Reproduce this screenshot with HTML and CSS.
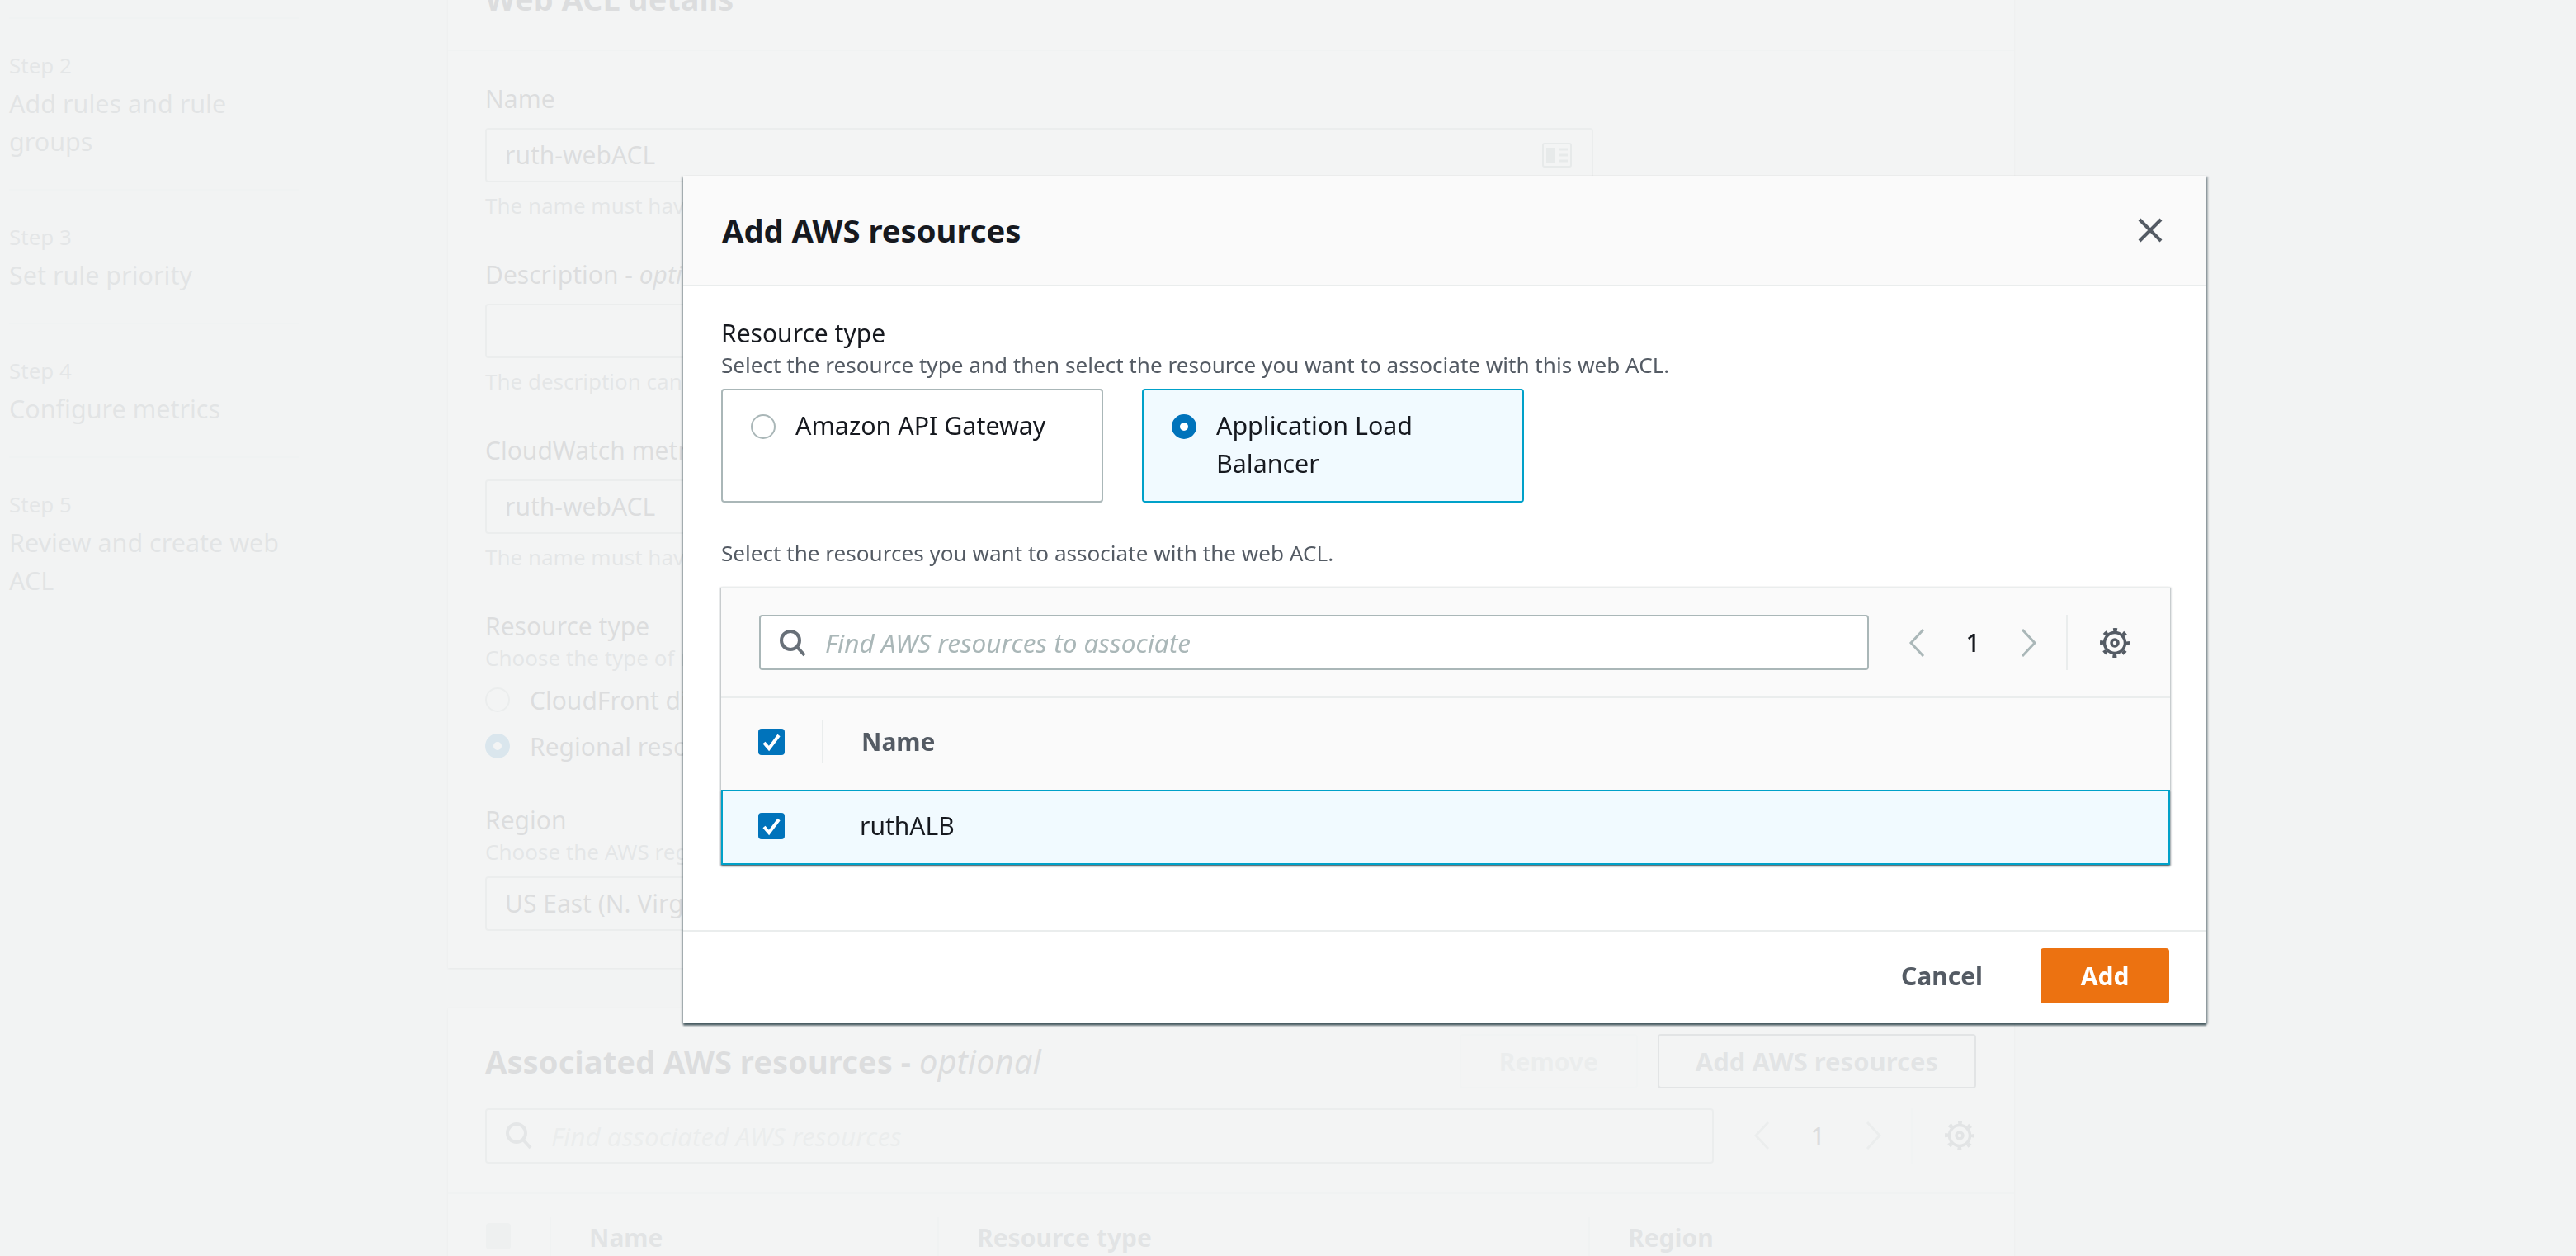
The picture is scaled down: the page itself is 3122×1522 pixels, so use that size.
FILE: index.html
```html
<!DOCTYPE html>
<html lang="en">
<head>
  <meta charset="UTF-8">
  <title>Add AWS resources</title>
  <link rel="stylesheet" href="styles.css">
</head>
<body>
<div class="page">
  <aside class="steps">
    <div class="step">
      <div class="step-num">Step 2</div>
      <div class="step-name">Add rules and rule groups</div>
    </div>
    <div class="step">
      <div class="step-num">Step 3</div>
      <div class="step-name">Set rule priority</div>
    </div>
    <div class="step">
      <div class="step-num">Step 4</div>
      <div class="step-name">Configure metrics</div>
    </div>
    <div class="step">
      <div class="step-num">Step 5</div>
      <div class="step-name">Review and create web ACL</div>
    </div>
  </aside>

  <main class="main">
    <section class="card">
      <h2 class="card-head">Web ACL details</h2>
      <div class="card-body">
        <div class="field">
          <label class="label">Name</label>
          <div class="input">ruth-webACL
            <svg class="input-icon" width="36" height="30" viewBox="0 0 36 30"><rect x="1" y="1" width="34" height="28" rx="2" fill="none" stroke="#879596" stroke-width="2"/><rect x="5" y="6" width="11" height="18" fill="#879596"/><path d="M20 8h11M20 15h11M20 22h11" stroke="#879596" stroke-width="3"/></svg>
          </div>
          <div class="note">The name must have 1-128 characters.</div>
        </div>
        <div class="field">
          <label class="label">Description - <i>optional</i></label>
          <div class="input"></div>
          <div class="note">The description can have 1-256 characters.</div>
        </div>
        <div class="field">
          <label class="label">CloudWatch metric name</label>
          <div class="input">ruth-webACL</div>
          <div class="note">The name must have 1-128 characters.</div>
        </div>
        <div class="field field-radio">
          <label class="label">Resource type</label>
          <div class="hint">Choose the type of resource to associate.</div>
          <div class="radio-list">
            <div class="radio-row"><span class="radio"></span>CloudFront distributions</div>
            <div class="radio-row"><span class="radio radio-on"></span>Regional resources</div>
          </div>
        </div>
        <div class="field field-last">
          <label class="label">Region</label>
          <div class="hint">Choose the AWS region.</div>
          <div class="input input-region">US East (N. Virginia)</div>
        </div>
      </div>
    </section>

    <section class="card card-assoc">
      <div class="assoc-head">
        <h2 class="assoc-title">Associated AWS resources - <i>optional</i></h2>
        <button class="btn btn-off">Remove</button>
        <button class="btn">Add AWS resources</button>
      </div>
      <div class="assoc-tools">
        <div class="search">
          <svg class="search-icon" width="34" height="34" viewBox="0 0 34 34"><circle cx="14" cy="14" r="11" fill="none" stroke="#687078" stroke-width="4"/><path d="M22 22l9 10" stroke="#687078" stroke-width="4"/></svg>
          <span class="placeholder">Find associated AWS resources</span>
        </div>
        <svg class="chev chev-left" width="22" height="34" viewBox="0 0 22 34"><path d="M19 1L4 17l15 16" fill="none" stroke="#aab7b8" stroke-width="3"/></svg>
        <span class="page-num">1</span>
        <svg class="chev" width="22" height="34" viewBox="0 0 22 34"><path d="M3 1l15 16L3 33" fill="none" stroke="#aab7b8" stroke-width="3"/></svg>
        <span class="tool-div"></span>
        <svg class="gear" width="38" height="38" viewBox="0 0 38 38"><circle cx="19" cy="19" r="12.5" fill="none" stroke="#545b64" stroke-width="3.5"/><circle cx="19" cy="19" r="16" fill="none" stroke="#545b64" stroke-width="4" stroke-dasharray="5 7.57" stroke-dashoffset="2.5"/><circle cx="19" cy="19" r="4" fill="none" stroke="#545b64" stroke-width="3.5"/></svg>
      </div>
      <div class="assoc-cols">
        <span class="check-off"></span>
        <span class="col col-name">Name</span>
        <span class="col col-type">Resource type</span>
        <span class="col col-region">Region</span>
      </div>
    </section>
  </main>
</div>

<div class="overlay"></div>

<div class="modal">
  <header class="modal-head">
    <h2 class="modal-title">Add AWS resources</h2>
    <svg class="close" width="30" height="30" viewBox="0 0 30 30"><path d="M2 2l26 26M28 2L2 28" stroke="#545b64" stroke-width="4"/></svg>
  </header>

  <div class="modal-body">
    <div class="modal-label">Resource type</div>
    <div class="modal-hint">Select the resource type and then select the resource you want to associate with this web ACL.</div>
    <div class="tiles">
      <div class="tile"><span class="radio"></span><span>Amazon API Gateway</span></div>
      <div class="tile tile-on"><span class="radio radio-on"></span><span>Application Load Balancer</span></div>
    </div>
    <div class="modal-hint hint-table">Select the resources you want to associate with the web ACL.</div>

    <div class="table">
      <div class="toolbar">
        <div class="search">
          <svg class="search-icon" width="34" height="34" viewBox="0 0 34 34"><circle cx="14" cy="14" r="11" fill="none" stroke="#687078" stroke-width="4"/><path d="M22 22l9 10" stroke="#687078" stroke-width="4"/></svg>
          <span class="placeholder">Find AWS resources to associate</span>
        </div>
        <svg class="chev chev-left" width="22" height="34" viewBox="0 0 22 34"><path d="M19 1L4 17l15 16" fill="none" stroke="#aab7b8" stroke-width="3"/></svg>
        <span class="page-num">1</span>
        <svg class="chev" width="22" height="34" viewBox="0 0 22 34"><path d="M3 1l15 16L3 33" fill="none" stroke="#aab7b8" stroke-width="3"/></svg>
        <span class="tool-div"></span>
        <svg class="gear" width="38" height="38" viewBox="0 0 38 38"><circle cx="19" cy="19" r="12.5" fill="none" stroke="#545b64" stroke-width="3.5"/><circle cx="19" cy="19" r="16" fill="none" stroke="#545b64" stroke-width="4" stroke-dasharray="5 7.57" stroke-dashoffset="2.5"/><circle cx="19" cy="19" r="4" fill="none" stroke="#545b64" stroke-width="3.5"/></svg>
      </div>
      <div class="thead">
        <span class="check"><svg width="32" height="32" viewBox="0 0 32 32"><path d="M7 17l6 7 12-16" fill="none" stroke="#fff" stroke-width="4"/></svg></span>
        <span class="thead-div"></span>
        <span class="thead-name">Name</span>
      </div>
      <div class="row">
        <span class="check"><svg width="32" height="32" viewBox="0 0 32 32"><path d="M7 17l6 7 12-16" fill="none" stroke="#fff" stroke-width="4"/></svg></span>
        <span class="row-name">ruthALB</span>
      </div>
    </div>
  </div>

  <footer class="modal-foot">
    <button class="link-btn">Cancel</button>
    <button class="add-btn">Add</button>
  </footer>
</div>
</body>
</html>
```

FILE: styles.css
```css
* {
  box-sizing: border-box;
}
html, body {
  margin: 0;
  height: 1522px;
  overflow: hidden;
}
body {
  font-family: "Noto Sans", "Open Sans", sans-serif;
  font-size: 30px;
  color: #16191f;
  background: #f2f3f3;
}
h2 {
  margin: 0;
}

/* page behind the dialog */
.page {
  display: flex;
  margin-top: -40px;
}
.steps {
  width: 543px;
  padding: 61px 181px 0 11px;
  flex: none;
}
.step {
  border-top: 2px solid #dfe4e4;
  padding: 38px 0 35px;
}
.step-num {
  font-size: 26px;
  line-height: 36px;
  color: #687078;
}
.step-name {
  margin-top: 5px;
  font-size: 30.5px;
  line-height: 46px;
  color: #545b64;
}
.main {
  width: 1898px;
  flex: none;
}
.card {
  background: #fff;
  box-shadow: 0 2px 2px rgba(0, 28, 36, .3), 0 0 2px rgba(0, 28, 36, .15);
}
.card-head {
  height: 102px;
  padding: 16px 45px 0;
  font-size: 38px;
  line-height: 44px;
  border-bottom: 2px solid #dfe4e4;
}
.card-body {
  padding: 36px 46px 45px 45px;
}
.field {
  margin-bottom: 44px;
}
.field-radio {
  margin-bottom: 40px;
}
.field-last {
  margin-bottom: 0;
}
.label {
  display: block;
  line-height: 44px;
  margin-bottom: 13px;
}
.input {
  position: relative;
  width: 1343px;
  height: 66px;
  padding: 0 22px;
  line-height: 62px;
  color: #16191f;
  border: 2px solid #aab7b8;
  border-radius: 4px;
  background: #fff;
}
.input-icon {
  position: absolute;
  right: 24px;
  top: 16px;
}
.note {
  margin-top: 10px;
  font-size: 26px;
  line-height: 36px;
  color: #687078;
}
.hint {
  margin-top: -15px;
  font-size: 26px;
  line-height: 36px;
  color: #687078;
}
.radio-list {
  margin-top: 5px;
}
.radio-row {
  display: flex;
  align-items: center;
  gap: 24px;
  height: 56px;
}
.radio {
  flex: none;
  width: 30px;
  height: 30px;
  border: 2px solid #aab7b8;
  border-radius: 50%;
  background: #fff;
}
.radio-on {
  border: 10px solid #0073bb;
}
.input-region {
  margin-top: 12px;
}
.card-assoc {
  margin-top: 48px;
  height: 400px;
}
.assoc-head {
  display: flex;
  align-items: center;
  gap: 24px;
  padding: 32px 46px 0 45px;
}
.assoc-title {
  flex: 1;
  font-size: 38.2px;
  line-height: 66px;
}
.assoc-title i {
  font-size: 40px;
  font-weight: 400;
}
.btn {
  height: 66px;
  padding: 0 44px;
  font: 700 31px "Noto Sans", sans-serif;
  color: #545b64;
  background: #fff;
  border: 2px solid #545b64;
  border-radius: 4px;
}
.btn-off {
  padding: 0 46px;
  font-size: 30px;
  color: #aab7b8;
  border-color: #eaeded;
}
.assoc-tools {
  display: flex;
  align-items: center;
  height: 66px;
  margin: 24px 0 36px;
  padding-left: 45px;
}
.assoc-tools .search {
  width: 1489px;
}
.assoc-cols {
  position: relative;
  display: flex;
  align-items: center;
  height: 110px;
  padding: 0 0 6px 46px;
  border-top: 2px solid #dfe4e4;
  font-weight: 700;
  color: #545b64;
}
.check-off {
  width: 30px;
  height: 32px;
  border-radius: 4px;
  background: #c8d0d0;
}
.col {
  position: absolute;
  top: 31px;
  line-height: 44px;
}
.col::before {
  content: "";
  position: absolute;
  left: -48px;
  top: -3px;
  width: 2px;
  height: 53px;
  background: #dfe4e4;
}
.col-name {
  left: 171px;
}
.col-type {
  left: 641px;
}
.col-region {
  left: 1430px;
}

/* page is greyed out under the dialog */
.overlay {
  position: fixed;
  inset: 0;
  background: rgba(242, 243, 243, .9);
}

/* dialog */
.modal {
  position: fixed;
  left: 828px;
  top: 213px;
  width: 1846px;
  height: 1027px;
  display: flex;
  flex-direction: column;
  background: #fff;
  box-shadow: 0 3px 2px rgba(0, 28, 36, .55), 2px 1px 2px rgba(0, 28, 36, .3), -2px 1px 2px rgba(0, 28, 36, .2);
}
.modal-head {
  display: flex;
  align-items: center;
  justify-content: space-between;
  height: 134px;
  padding: 0 53px 0 47px;
  background: #fafafa;
  border-bottom: 2px solid #eaeded;
}
.modal-title {
  font-size: 38.2px;
  line-height: 44px;
}
.modal-body {
  flex: 1;
  padding: 35px 44px 0 46px;
}
.modal-label {
  line-height: 44px;
}
.modal-hint {
  margin-top: -2px;
  font-size: 26.1px;
  line-height: 36px;
  color: #545b64;
}
.tiles {
  display: flex;
  gap: 47px;
  margin-top: 11px;
}
.tile {
  display: flex;
  gap: 24px;
  width: 463px;
  height: 138px;
  padding: 20px 34px;
  font-size: 30.4px;
  line-height: 46px;
  border: 2px solid #aab7b8;
  border-radius: 4px;
}
.tile .radio {
  margin-top: 9px;
}
.tile-on {
  background: #f1faff;
  border-color: #00a1c9;
}
.hint-table {
  margin-top: 43px;
}
.table {
  margin-top: 23px;
  border-top: 2px solid #eaeded;
  box-shadow: 1px 1px 2px rgba(0, 28, 36, .3), -1px 1px 2px rgba(0, 28, 36, .3);
}
.toolbar {
  display: flex;
  align-items: center;
  height: 133px;
  padding: 0 0 0 46px;
  background: #fafafa;
  border-bottom: 2px solid #eaeded;
}
.search {
  position: relative;
  display: flex;
  align-items: center;
  gap: 22px;
  flex: none;
  width: 1345px;
  height: 67px;
  padding: 0 22px;
  background: #fff;
  border: 2px solid #aab7b8;
  border-radius: 4px;
}
.placeholder {
  font-size: 31.5px;
  font-style: italic;
  color: #aab7b8;
}
.chev-left {
  margin-left: 47px;
}
.page-num {
  width: 46px;
  margin: 0 34px;
  text-align: center;
  font-weight: 500;
}
.tool-div {
  width: 2px;
  height: 67px;
  margin: 0 38px 0 34px;
  background: #eaeded;
}
.thead {
  display: flex;
  align-items: center;
  height: 111px;
  padding: 0 0 6px 45px;
  background: #fafafa;
}
.check {
  display: block;
  flex: none;
  width: 32px;
  height: 32px;
  border-radius: 4px;
  background: #0073bb;
}
.check svg {
  display: block;
}
.thead-div {
  width: 2px;
  height: 53px;
  margin: 0 46px 0 45px;
  background: #eaeded;
}
.thead-name {
  font-weight: 700;
  color: #545b64;
}
.row {
  display: flex;
  align-items: center;
  height: 91px;
  padding: 0 0 4px 43px;
  background: #f1faff;
  border: 2px solid #00a1c9;
  box-shadow: 0 2px 2px rgba(0, 28, 36, .4);
}
.row-name {
  margin-left: 91px;
}
.modal-foot {
  display: flex;
  justify-content: flex-end;
  align-items: flex-start;
  height: 113px;
  padding: 20px 45px 0 0;
  border-top: 2px solid #eaeded;
}
.link-btn,
.add-btn {
  font: 700 30px "Noto Sans", sans-serif;
  border: none;
  border-radius: 4px;
  height: 67px;
}
.link-btn {
  padding: 0 36px;
  margin-right: 34px;
  color: #545b64;
  background: none;
}
.add-btn {
  width: 156px;
  color: #fff;
  background: #ec7211;
}
```
